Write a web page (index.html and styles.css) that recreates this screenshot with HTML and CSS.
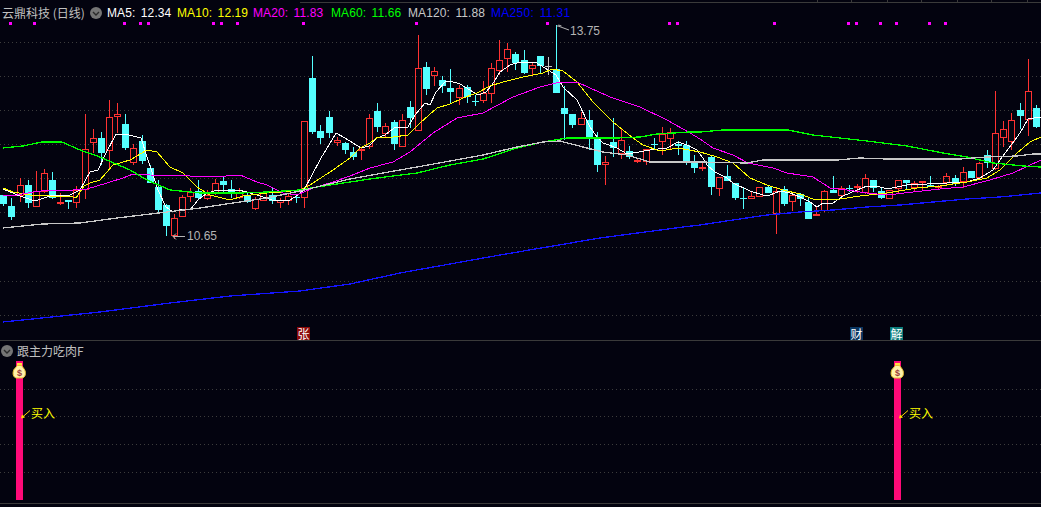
FILE: index.html
```html
<!DOCTYPE html>
<html lang="zh-CN">
<head>
  <meta charset="UTF-8" />
  <title>云鼎科技 (日线)</title>
  <link rel="stylesheet" href="styles.css">
</head>
<body>
  <svg id="ruler" class="chart" width="1041" height="3" viewBox="0 0 1041 3"></svg>

  <!-- K线主图 -->
  <section class="panel panel-main">
    <header class="legend">
      <span class="stock-name">云鼎科技 (日线)</span>
      <svg class="toggle" viewBox="0 0 12 12"><circle cx="6" cy="6" r="6" /><path d="M3 5l3 3 3-3" /></svg>
      <span class="ma ma5">MA5: 12.34</span>
      <span class="ma ma10">MA10: 12.19</span>
      <span class="ma ma20">MA20: 11.83</span>
      <span class="ma ma60">MA60: 11.66</span>
      <span class="ma ma120">MA120: 11.88</span>
      <span class="ma ma250">MA250: 11.31</span>
    </header>
    <svg id="kline" class="chart" width="1041" height="320" viewBox="0 20 1041 320"></svg>
    <span class="tag tag-zhang">张</span>
    <span class="tag tag-cai">财</span>
    <span class="tag tag-jie">解</span>
  </section>

  <!-- 副图指标 -->
  <section class="panel panel-sub">
    <header class="legend legend-sub">
      <svg class="toggle" viewBox="0 0 12 12"><circle cx="6" cy="6" r="6" /><path d="M3 5l3 3 3-3" /></svg>
      <span class="indicator-name">跟主力吃肉F</span>
    </header>
    <svg id="signal" class="chart" width="1041" height="142" viewBox="0 361 1041 142"></svg>
  </section>

  <!-- 下一个副图只露出图标顶部 -->
  <section class="legend legend-next">
    <svg class="toggle" viewBox="0 0 12 12"><circle cx="6" cy="6" r="6" /></svg>
  </section>

  <script src="chart.js"></script>
</body>
</html>
```

FILE: styles.css
```css
* {
  box-sizing: border-box;
}

body {
  margin: 0;
  width: 1041px;
  height: 507px;
  overflow: hidden;
  background: #03030f;
  font-family: "Liberation Sans", "Noto Sans CJK SC", sans-serif;
  font-size: 12px;
}

.panel {
  position: relative;
}

.panel-main {
  height: 337px;
}

.panel-sub {
  border-top: 1px solid #3a3a3a;
  border-bottom: 1px solid #3a3a3a;
  height: 164px;
}

.chart {
  display: block;
}

/* 顶部均线图例 */
.legend {
  display: flex;
  align-items: center;
  height: 17px;
  padding-left: 2px;
  padding-top: 2px;
  white-space: pre;
}

.legend-sub {
  height: 19px;
  padding-left: 1px;
  padding-top: 0;
}

.legend-next {
  padding-left: 1px;
  padding-top: 2px;
}

.stock-name,
.indicator-name {
  font-family: "Noto Sans CJK SC", sans-serif;
  color: #c0c0c0;
}

.stock-name {
  width: 88px;
}

.indicator-name {
  margin-left: 4px;
}

.toggle {
  flex: none;
  width: 12px;
  height: 12px;
}

.toggle circle {
  fill: #757575;
}

.toggle path {
  fill: none;
  stroke: #2a2a2a;
  stroke-width: 1.4;
}

.ma {
  word-spacing: 2px;
  letter-spacing: 0.1px;
}

.ma5 {
  color: #ffffff;
  margin-left: 5px;
  width: 70px;
}

.ma10 {
  color: #ffff00;
  width: 76px;
}

.ma20 {
  color: #ff00ff;
  width: 78px;
}

.ma60 {
  color: #00ff00;
  width: 77px;
}

.ma120 {
  color: #c8c8c8;
  width: 83px;
}

.ma250 {
  color: #0000ff;
  letter-spacing: 0.3px;
}

/* 事件标记 */
.tag {
  position: absolute;
  top: 324px;
  width: 13px;
  height: 13px;
  font-family: "Noto Sans CJK SC", sans-serif;
  font-size: 12px;
  line-height: 13px;
  text-align: center;
  color: #ffffff;
}

.tag-zhang {
  left: 297px;
  background: #8c0a0a;
}

.tag-cai {
  left: 850px;
  background: #0a3560;
}

.tag-jie {
  left: 890px;
  background: #0c7c7c;
}

/* SVG 内容 */
.rule {
  fill: #3a3a3a;
}

.grid {
  stroke: #3c3c3c;
  stroke-width: 1;
  stroke-dasharray: 1 3;
  shape-rendering: crispEdges;
}

.up {
  fill: none;
  stroke: #ff3232;
  shape-rendering: crispEdges;
}

.up-wick {
  fill: #ff3232;
}

.down,
.down-wick {
  fill: #54ffff;
}

.flat,
.flat-wick {
  fill: #c8c8c8;
}

.dot {
  fill: #ff00ff;
}

.line {
  fill: none;
  stroke-width: 1;
  shape-rendering: crispEdges;
}

.line-slow {
  stroke-width: 1.3;
}

.extreme {
  fill: #b4b4b4;
  font-family: "Liberation Sans", sans-serif;
  font-size: 12px;
}

.pointer {
  fill: none;
  stroke: #b4b4b4;
}

.bar {
  fill: #ff0a78;
}

.buy-arrow {
  fill: none;
  stroke: #ffd800;
}

.buy-head {
  fill: #ffd800;
}

.buy-text {
  fill: #ffff00;
  font-family: "Noto Sans CJK SC", sans-serif;
  font-size: 12px;
}

.bag {
  fill: #fff2a8;
  stroke: #e8c030;
}

.bag-neck {
  fill: #ffe040;
}

.bag-sign {
  fill: #9a3c3c;
  font-family: "Liberation Sans", sans-serif;
  font-weight: bold;
  font-size: 9px;
  text-anchor: middle;
}
```

FILE: chart.js
```js
// 每根K线: [最高, 实体上沿, 实体下沿, 最低, 类型] 单位都是屏幕像素 y
var candles = [
  [195,195,204,206,'c'],[198,206,217,220,'c'],[178,185,196,202,'r'],[180,185,203,208,'c'],
  [171,191,207,207,'r'],[169,173,192,193,'r'],[172,180,198,199,'c'],[193,202,203,205,'r'],
  [200,200,202,209,'c'],[186,190,203,208,'r'],[114,149,190,199,'r'],[129,138,143,153,'r'],
  [132,138,153,165,'c'],[100,117,151,170,'r'],[103,114,117,133,'r'],[114,124,148,150,'c'],
  [144,148,163,165,'r'],[135,141,161,164,'c'],[165,168,183,183,'c'],[180,187,210,212,'c'],
  [204,205,226,236,'c'],[214,218,236,239,'r'],[195,197,217,217,'r'],[188,192,197,202,'r'],
  [180,191,198,199,'c'],[190,195,199,200,'r'],[179,183,194,195,'r'],[176,181,185,193,'c'],
  [180,189,194,198,'c'],[188,192,198,199,'r'],[192,195,202,203,'c'],[197,199,209,210,'r'],
  [193,193,201,201,'r'],[188,195,201,204,'c'],[198,200,203,208,'r'],[193,196,201,205,'r'],
  [195,197,198,203,'c'],[121,121,198,208,'r'],[56,78,132,134,'c'],[125,131,138,144,'c'],
  [111,117,133,138,'c'],[137,140,143,146,'r'],[142,143,150,154,'c'],[147,152,157,160,'c'],
  [148,149,151,160,'r'],[114,118,147,149,'r'],[103,111,127,132,'c'],[123,126,134,138,'r'],
  [120,122,144,150,'c'],[114,120,147,147,'r'],[101,107,118,128,'c'],[35,68,131,131,'r'],
  [62,67,89,95,'c'],[67,71,76,86,'r'],[76,80,86,93,'c'],[69,88,92,104,'c'],
  [85,88,98,105,'r'],[85,87,97,103,'c'],[95,101,102,106,'c'],[81,93,101,103,'r'],
  [63,68,94,103,'r'],[40,60,71,75,'r'],[43,49,59,72,'r'],[52,54,63,70,'c'],
  [50,60,73,74,'c'],[62,65,69,75,'r'],[56,56,66,73,'c'],[57,66,67,75,'g'],
  [25,69,93,93,'c'],[86,108,114,140,'c'],[114,114,125,128,'c'],[112,118,125,125,'r'],
  [110,120,137,150,'c'],[132,139,165,172,'c'],[156,162,165,185,'r'],[118,142,148,157,'c'],
  [128,140,154,159,'r'],[146,151,157,159,'c'],[158,160,161,163,'r'],[149,149,162,165,'r'],
  [138,144,145,150,'c'],[127,134,142,155,'r'],[128,132,139,150,'r'],[141,144,146,155,'c'],
  [141,145,161,165,'c'],[155,161,168,173,'c'],[162,167,168,171,'r'],[155,157,187,195,'c'],
  [177,177,189,196,'r'],[165,176,181,181,'c'],[183,183,198,200,'c'],[188,198,199,209,'c'],
  [191,196,199,199,'r'],[187,187,197,197,'r'],[185,187,193,193,'c'],[188,191,214,234,'r'],
  [186,189,204,206,'c'],[192,195,202,211,'r'],[193,194,199,206,'c'],[198,202,219,219,'c'],
  [207,214,215,215,'r'],[190,191,211,212,'r'],[176,190,193,193,'c'],[186,188,196,199,'r'],
  [185,188,189,192,'c'],[184,186,188,193,'r'],[174,178,193,194,'r'],[180,180,188,192,'c'],
  [188,191,198,199,'c'],[190,190,199,199,'r'],[180,180,189,193,'r'],[180,180,183,189,'c'],
  [181,183,188,191,'r'],[181,181,183,190,'r'],[176,185,187,187,'c'],[185,186,187,189,'r'],
  [173,176,183,185,'r'],[175,178,184,186,'c'],[167,172,182,188,'r'],[171,171,178,178,'c'],
  [162,163,178,178,'r'],[150,155,163,168,'c'],[91,133,169,170,'r'],[121,129,138,147,'r'],
  [113,120,142,150,'r'],[103,110,116,129,'c'],[59,91,120,136,'r'],[105,108,127,128,'c']
];

var lines = {
  '#ffffff': '3,189 20,196 35,201 50,196 70,195 80,190 90,172 98,170 105,155 116,134 125,134 133,136 141,138 148,160 158,190 166,207 173,212 182,209 190,210 198,200 206,194 214,191 238,190 247,192 263,197 272,200 288,201 295,197 304,190 312,175 321,158 329,145 336,133 345,138 353,143 361,148 369,146 377,138 385,135 394,128 408,127 415,115 425,103 430,105 436,92 445,82 450,81 460,84 470,90 478,95 486,92 492,85 500,72 510,65 520,62 535,62 545,68 556,75 563,87 577,100 590,127 597,137 603,143 617,148 627,154 633,153 650,150 667,148 678,142 687,145 697,150 703,158 707,165 715,172 727,178 733,183 750,191 763,195 770,195 780,191 790,193 800,197 810,202 817,207 823,203 833,203 843,196 857,190 867,186 877,186 887,189 907,185 927,184 947,183 967,182 980,178 993,170 1000,160 1020,133 1028,119 1041,117',
  '#ffff00': '3,188 13,192 30,195 50,196 70,196 76,198 84,186 90,183 100,180 113,165 130,160 147,150 157,152 170,167 183,173 197,187 210,195 230,200 243,196 267,193 283,192 300,190 310,185 333,170 350,158 360,148 370,143 378,137 393,137 408,135 420,123 437,108 450,104 463,98 477,93 490,86 503,82 523,77 543,73 552,69 563,71 577,82 593,102 613,122 633,138 643,145 660,151 678,148 700,152 717,157 733,163 750,178 767,185 783,190 800,194 813,199 840,199 860,196 887,193 917,188 940,186 967,182 987,178 1000,170 1017,153 1030,142 1041,137',
  '#ff00ff': '3,195 17,195 33,192 50,190 73,190 87,189 107,183 123,178 133,174 150,175 190,176 213,177 240,175 257,182 267,185 283,193 297,195 313,188 333,182 350,176 370,168 393,162 410,152 433,133 457,118 483,113 513,97 540,87 560,82 577,82 610,97 640,107 667,120 690,133 700,139 713,148 733,155 748,163 773,168 787,173 813,177 830,188 847,190 867,193 887,195 913,192 940,189 963,187 990,180 1013,173 1041,160',
  '#00ff00': '3,148 23,146 42,142 62,142 80,150 100,157 130,170 147,180 170,190 200,193 240,193 267,192 300,190 317,187 350,182 370,179 393,176 417,173 450,165 483,159 517,148 543,142 567,138 617,138 640,137 657,134 690,132 700,132 723,130 788,130 813,135 867,141 907,146 943,153 967,157 993,163 1023,166 1041,167',
  '#c8c8c8': '3,228 43,224 80,223 117,218 167,212 200,208 233,203 267,198 300,191 350,179 383,173 417,167 450,161 483,155 517,147 543,142 560,141 583,147 603,152 627,155 650,162 700,162 747,163 763,160 837,160 860,158 887,159 960,159 987,157 1017,156 1033,154 1041,154',
  '#1414ff': '3,322 100,312 170,303 230,296 300,291 350,284 400,273 500,255 600,238 683,227 700,225 733,220 767,215 800,212 833,210 867,207 900,205 933,202 967,199 1000,197 1041,193'
};

// 长周期均线画粗一点
var slowLines = ['#00ff00', '#c8c8c8', '#1414ff'];

var dots = [10,34,124,140,148,213,221,237,303,416,547,669,677,774,848,856,880,896,929,945];

function rect(cls, x, y, w, h) {
  return '<rect class="' + cls + '" x="' + x + '" y="' + y + '" width="' + w + '" height="' + h + '"/>';
}

function gridLine(y) {
  return '<line class="grid" x1="0" x2="1041" y1="' + (y + 0.5) + '" y2="' + (y + 0.5) + '"/>';
}

function drawRuler() {
  var html = rect('rule', 300, 2, 741, 1);
  [817, 851, 887, 921, 957, 991, 1027].forEach(function (x) {
    html += rect('rule', x, 0, 1, 2);
  });
  document.getElementById('ruler').innerHTML = html;
}

function drawKline() {
  var html = '';
  [42, 76, 110, 144, 178, 212, 247, 281, 315].forEach(function (y) {
    html += gridLine(y);
  });

  dots.forEach(function (x) {
    html += rect('dot', x - 1, 22, 3, 3);
  });

  candles.forEach(function (c, i) {
    var x = Math.round(3.3 + 8.13 * i);
    var kind = c[4];
    if (kind === 'r') {
      html += rect('up-wick', x, c[0], 1, c[1] - c[0]);
      html += rect('up-wick', x, c[2], 1, c[3] - c[2]);
      html += rect('up', x - 2.5, c[1] + 0.5, 6, Math.max(c[2] - c[1] - 1, 1));
    } else {
      var cls = kind === 'c' ? 'down' : 'flat';
      html += rect(cls + '-wick', x, c[0], 1, c[3] - c[0]);
      html += rect(cls, x - 3, c[1], 7, Math.max(c[2] - c[1], 1));
    }
  });

  Object.keys(lines).forEach(function (color) {
    var cls = slowLines.indexOf(color) >= 0 ? 'line line-slow' : 'line';
    html += '<polyline class="' + cls + '" stroke="' + color + '" points="' + lines[color] + '"/>';
  });

  // 最高最低价标注
  html += '<path class="pointer" d="M556.5 27l2-2 3 1M558 26l11 4"/>';
  html += '<text class="extreme" x="570" y="35">13.75</text>';
  html += '<path class="pointer" d="M185 236.5H173M176 233.5l-3 3 3 3"/>';
  html += '<text class="extreme" x="187" y="240">10.65</text>';

  document.getElementById('kline').innerHTML = html;
}

function buySignal(x) {
  var s = rect('bar', x, 362, 7, 139);
  s += '<rect class="bag-neck" x="' + (x + 1) + '" y="364" width="5" height="3"/>';
  s += '<path class="bag" d="M' + (x + 1.5) + ' 366.5h4l3 4c1.8 3.5 1 8-2.5 8.5h-5.5c-3.5-.5-4.3-5-2.5-8.5z"/>';
  s += '<text class="bag-sign" x="' + (x + 3.5) + '" y="377">$</text>';
  s += '<path class="buy-arrow" d="M' + (x + 14) + ' 411.5l-8 7"/>';
  s += '<path class="buy-head" d="M' + (x + 5) + ' 419.5l1-4 3 3z"/>';
  s += '<text class="buy-text" x="' + (x + 15) + '" y="419">买入</text>';
  return s;
}

function drawSignal() {
  var html = '';
  [390, 417, 445, 473].forEach(function (y) {
    html += gridLine(y);
  });
  html += buySignal(16);
  html += buySignal(894);
  document.getElementById('signal').innerHTML = html;
}

drawRuler();
drawKline();
drawSignal();
```
